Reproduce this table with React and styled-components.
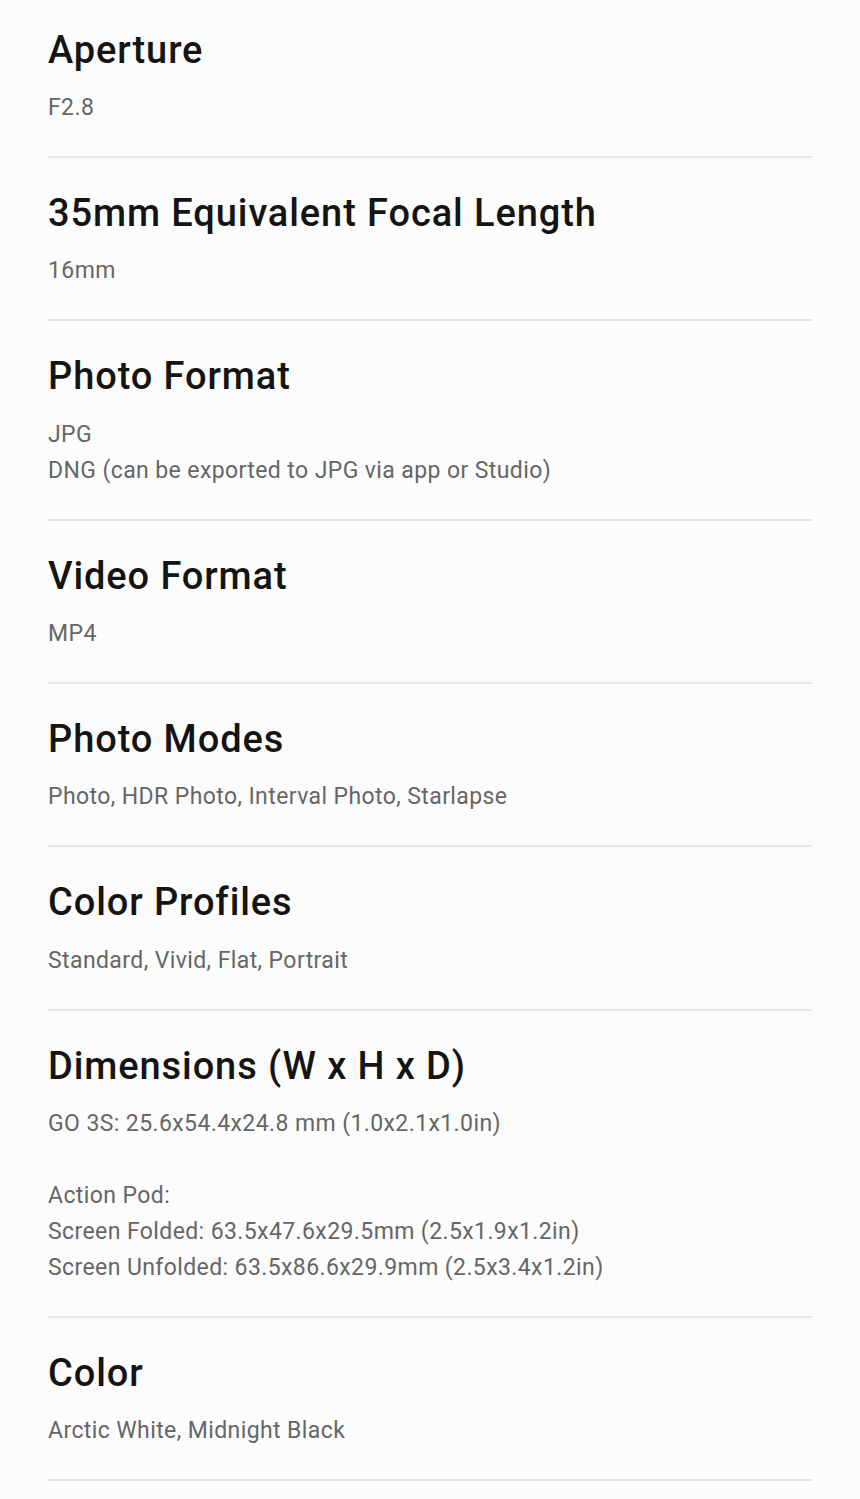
import styled, { createGlobalStyle } from 'styled-components';

const specs = [
  { title: 'Aperture', lines: ['F2.8'] },
  { title: '35mm Equivalent Focal Length', lines: ['16mm'] },
  { title: 'Photo Format', lines: ['JPG', 'DNG (can be exported to JPG via app or Studio)'] },
  { title: 'Video Format', lines: ['MP4'] },
  { title: 'Photo Modes', lines: ['Photo, HDR Photo, Interval Photo, Starlapse'] },
  { title: 'Color Profiles', lines: ['Standard, Vivid, Flat, Portrait'] },
  {
    title: 'Dimensions (W x H x D)',
    lines: [
      'GO 3S: 25.6x54.4x24.8 mm (1.0x2.1x1.0in)',
      '',
      'Action Pod:',
      'Screen Folded: 63.5x47.6x29.5mm (2.5x1.9x1.2in)',
      'Screen Unfolded: 63.5x86.6x29.9mm (2.5x3.4x1.2in)',
    ],
  },
  { title: 'Color', lines: ['Arctic White, Midnight Black'] },
];

const App = () => {
  return (
    <>
      <GlobalStyle />
      <SpecList>
        {specs.map((spec) => (
          <SpecItem key={spec.title}>
            <Title>{spec.title}</Title>
            <Value>
              {spec.lines.map((line, i) => (
                <Line key={i}>{line || '\u00a0'}</Line>
              ))}
            </Value>
          </SpecItem>
        ))}
      </SpecList>
    </>
  );
};

const GlobalStyle = createGlobalStyle`
  body {
    margin: 0;
    background: #fcfcfc;
    font-family: Roboto, "Liberation Sans", sans-serif;
  }
`;

const SpecList = styled.div`
  padding: 0 48px;
`;

const SpecItem = styled.section`
  padding: 32px 0 29.85px;
  border-bottom: 2px solid #e6e6e6;

  &:first-child {
    padding-top: 26.5px;
  }
`;

const Title = styled.h3`
  margin: 0;
  font-size: 38px;
  line-height: 47px;
  font-weight: 500;
  letter-spacing: 0.9px;
  color: #141414;
`;

const Value = styled.div`
  margin-top: 16.5px;
  font-size: 23px;
  line-height: 36px;
  letter-spacing: 0.4px;
  color: #666;
`;

const Line = styled.div``;

export default App;
